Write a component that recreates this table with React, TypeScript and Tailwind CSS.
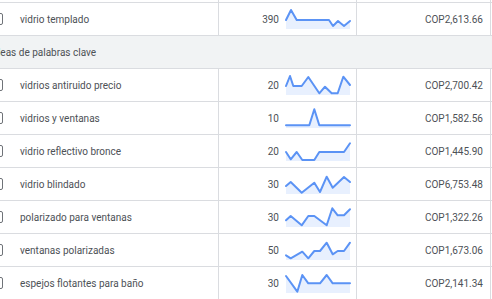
import React from 'react'

type Row = { kw: string; vol: string; bid: string; pts: number[][] }

const rows: Row[] = [
  { kw: 'vidrios antiruido precio', vol: '20', bid: 'COP2,700.42', pts: [[0, 11], [4, 1], [7.3, 11], [15.7, 11], [22.3, 2], [33.3, 18.3], [39, 11.7], [45.7, 18.3], [51.7, 18.3], [57.3, 1.7], [64, 10]] },
  { kw: 'vidrios y ventanas', vol: '10', bid: 'COP1,582.56', pts: [[0, 17.3], [23.3, 17.3], [28.3, 1.3], [33.3, 17.3], [64, 17.3]] },
  { kw: 'vidrio reflectivo bronce', vol: '20', bid: 'COP1,445.90', pts: [[0, 11], [4.7, 18.3], [10.7, 11], [16.3, 19], [28.3, 19], [33.3, 11], [58, 11], [64, 2.3]] },
  { kw: 'vidrio blindado', vol: '30', bid: 'COP6,753.48', pts: [[0, 12], [4.7, 8], [15.7, 18.7], [28.3, 8.7], [34, 18], [40.7, 2.7], [46.7, 13.7], [58, 3], [64, 8]] },
  { kw: 'polarizado para ventanas', vol: '30', bid: 'COP1,322.26', pts: [[0, 13.3], [4.7, 9], [15.7, 18.3], [22.3, 9], [28.3, 9], [40.7, 18.3], [46.3, 1.3], [51.7, 8.3], [58, 8.3], [64, 2.3]] },
  { kw: 'ventanas polarizadas', vol: '50', bid: 'COP1,673.06', pts: [[0, 15.3], [4.7, 18.3], [16.3, 11.7], [22.3, 18.3], [28.3, 11], [34, 11], [40.7, 2.7], [46.7, 14.3], [51.7, 11], [58, 11], [64, 2.7]] },
  { kw: 'espejos flotantes para baño', vol: '30', bid: 'COP2,141.34', pts: [[0, 3], [11.3, 18.7], [16.3, 2], [22.3, 10.3], [34, 10.3], [40.7, 2], [46.7, 10.3], [64, 10.3]] },
]

const first: Row = { kw: 'vidrio templado', vol: '390', bid: 'COP2,613.66', pts: [[0, 11], [5, 1], [10.7, 11], [43, 11], [47, 17], [52, 12], [58, 17], [64, 12]] }

function Spark({ pts }: { pts: number[][] }) {
  const line = pts.map(p => p.join(',')).join(' ')
  const area = `0,20 ${line} 64,20`
  return (
    <svg width="64" height="20" viewBox="0 0 64 20" className="block overflow-visible">
      <polygon points={area} fill="#e8f0fe" />
      <polyline points={line} fill="none" stroke="#5b93f5" strokeWidth="2" strokeLinejoin="round" strokeLinecap="round" />
    </svg>
  )
}

function KeywordRow({ row }: { row: Row }) {
  return (
    <div className="flex h-[33px] border-b border-[#dadce0]">
      <div className="w-[235px] shrink-0 flex items-center pl-[7px] gap-[17px] border-r border-[#dadce0]">
        <span className="w-[12px] h-[12px] shrink-0 rounded-[2px] border-[1.5px] border-[#6f7378]" />
        <span>{row.kw}</span>
      </div>
      <div className="w-[138px] shrink-0 flex items-center gap-[7px] border-r border-[#dadce0]">
        <span className="w-[60px] text-right">{row.vol}</span>
        <Spark pts={row.pts} />
      </div>
      <div className="w-[134px] shrink-0 flex items-center justify-end pr-[7px] border-r border-[#dadce0]">
        {row.bid}
      </div>
    </div>
  )
}

export default function App() {
  return (
    <div className="w-[492px] h-[299px] overflow-hidden bg-white">
      <div
        className="-ml-[16px] w-[508px] text-[10px] text-[#4d5156]"
        style={{ fontFamily: 'Roboto, "Liberation Sans", sans-serif' }}
      >
        {/* ── sliver of the row above ── */}
        <div className="flex h-[3px] border-b border-[#dadce0]">
          <div className="w-[235px] shrink-0 border-r border-[#dadce0]" />
          <div className="w-[138px] shrink-0 border-r border-[#dadce0]" />
          <div className="w-[134px] shrink-0 border-r border-[#dadce0]" />
        </div>

        <KeywordRow row={first} />

        {/* ── section header ── */}
        <div className="h-[33px] flex items-center pl-[8px] bg-[#f1f3f4] border-b border-[#dadce0]">
          Ideas de palabras clave
        </div>

        {rows.map(r => (
          <KeywordRow key={r.kw} row={r} />
        ))}
      </div>
    </div>
  )
}
